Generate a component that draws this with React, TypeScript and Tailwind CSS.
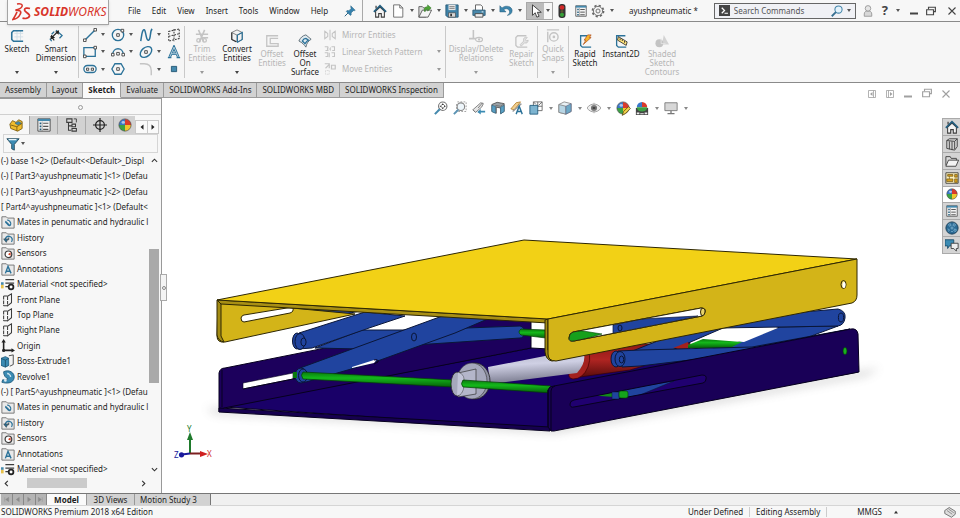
import React from 'react'

type Glyph = { className?: string }

const Svg = ({ className = 'w-3.5 h-3.5', children }: { className?: string; children: React.ReactNode }) => (
  <svg viewBox="0 0 16 16" fill="none" className={'shrink-0 ' + className} aria-hidden="true">{children}</svg>
)

const blue = '#2b7299'
const dark = '#3c3c3c'
const gray = '#c4c4c4'

const Caret = ({ className = 'text-[#555]' }: Glyph) => (
  <svg viewBox="0 0 4 3" className={'w-1 h-[3px] shrink-0 ' + className} aria-hidden="true"><path d="M0 0h4L2 3z" fill="currentColor" /></svg>
)

/* ---------- title bar icons ---------- */

const HomeIcon = ({ className }: Glyph) => (
  <Svg className={className}>
    <path d="M3 8v7h3.5v-4h3v4H13V8L8 3.5z" fill="#f4f4f4" stroke={dark} strokeWidth="1.2" />
    <path d="M1 9l7-7 7 7" stroke="#225d7e" strokeWidth="2" />
    <path d="M3.5 5V2" stroke={dark} strokeWidth="1.4" />
  </Svg>
)
const NewIcon = () => (
  <Svg><path d="M3 1h7l3.5 3.5V15H3z" fill="#fff" stroke="#666" /><path d="M10 1v3.5h3.5" stroke="#666" /></Svg>
)
const OpenIcon = () => (
  <Svg>
    <path d="M1 3h4l1.500 1.500H9V15H1z" fill="#dedede" stroke="#555" />
    <path d="M1 15l4-8h10.500l-4 8z" fill="#f5f5f5" stroke="#555" />
    <path d="M7 7c0-3 2-4 4-4V1l4 3.500L11 8V6C9 6 8 7 8 9z" fill="#4fa536" stroke="#28711b" strokeWidth=".6" />
  </Svg>
)
const SaveIcon = () => (
  <Svg>
    <path d="M1 1h14v14H3l-2-2z" fill="#3e82a8" stroke="#2c5a76" />
    <path d="M4 1h8v6H4z" fill="#e6e6e6" /><path d="M5 3h6M5 5h6" stroke="#777" />
    <path d="M4 10h8v5H4z" fill="#d5d5d5" stroke="#444" strokeWidth=".7" /><path d="M6 11h2v3H6z" fill="#333" />
  </Svg>
)
const PrintIcon = () => (
  <Svg>
    <path d="M4 7V1h6l2 2v4" fill="#fff" stroke="#555" />
    <path d="M1 7h14v6H1z" fill="#4a89ab" stroke="#2c5a76" />
    <path d="M3.500 11h9v4h-9z" fill="#eee" stroke="#444" /><path d="M11 9h2" stroke="#fff" />
  </Svg>
)
const UndoIcon = () => (
  <Svg>
    <path d="M1 2v7h7L5.500 6.500C8 4.500 11.500 5.500 12 8.500c.3 2-1 3.500-2.500 4.500 3.500-.5 5.500-2.500 5.500-5.500C15 3 8 .500 3.500 4.500z" fill="#3d86ad" stroke="#275e7d" strokeWidth=".6" />
  </Svg>
)
const CursorIcon = () => (
  <Svg><path d="M4 1v12l3-3 2 5 2.500-1-2-4.500H14z" fill="#fff" stroke="#333" /></Svg>
)
const TrafficIcon = () => (
  <Svg>
    <rect x="4" y="0" width="8" height="16" rx="3.500" fill="#333" />
    <circle cx="8" cy="4" r="2.700" fill="#d22828" /><circle cx="8" cy="8.500" r="1.600" fill="#5c5330" /><circle cx="8" cy="12.400" r="2.400" fill="#37a038" />
  </Svg>
)
const ListIcon = ({ className }: Glyph) => (
  <Svg className={className}>
    <path d="M1 1h14v14H1z" fill="#f4f4f4" stroke="#444" /><path d="M1 1h14v2.500H1z" fill="#4489ad" />
    <path d="M3 5h2v2H3zM3 8.500h2v2H3zM3 12h2v2H3z" fill="#225d7e" /><path d="M7 6h6M7 9.500h6M7 13h6" stroke="#555" strokeWidth="1.300" />
    <path d="M6 4v11" stroke="#777" strokeWidth=".6" />
  </Svg>
)
const GearIcon = () => (
  <Svg>
    <circle cx="8" cy="8" r="6.300" stroke="#666" strokeWidth="2" strokeDasharray="2.500 2.448" />
    <circle cx="8" cy="8" r="5.300" fill="#f2f2f2" stroke="#666" /><circle cx="8" cy="8" r="2.300" stroke="#666" />
  </Svg>
)
const PinIcon = () => (
  <Svg className="w-3 h-3">
    <path d="M9 1l6 6-1.500.800-1-.3-3 3 .2 2.500-1.200 1L3 8.500l1-1.200 2.500.2 3-3-.5-1.500z" fill="#3581ad" stroke="#25607f" strokeWidth=".6" /><path d="M5.500 10.500L1 15" stroke="#25607f" strokeWidth="1.300" />
  </Svg>
)
const MagnifierIcon = () => (
  <Svg className="w-3 h-3"><circle cx="10" cy="6" r="4.800" fill="#e4f2fb" stroke="#4385a9" strokeWidth="1.400" /><path d="M6.500 9.500L1 15" stroke="#366f90" strokeWidth="2.400" /></Svg>
)
const UserIcon = () => (
  <Svg className="w-3 h-3"><path d="M3 15v-3c0-3 2-4 5-4s5 1 5 4v3z" fill="#d8d8d8" stroke="#888" /><circle cx="8" cy="4.500" r="3.700" fill="#e5e5e5" stroke="#888" /></Svg>
)
const MinimizeIcon = () => <Svg className="w-2 h-2"><path d="M0 13h16" stroke="currentColor" strokeWidth="4" /></Svg>
const RestoreIcon = () => (
  <Svg className="w-2.5 h-2.5"><path d="M4 5V2h11v7h-3" stroke="currentColor" strokeWidth="1.800" /><path d="M1 6h11v8H1z" stroke="currentColor" strokeWidth="1.800" /></Svg>
)
const CloseIcon = () => <Svg className="w-2 h-2"><path d="M1 1l14 14M15 1L1 15" stroke="currentColor" strokeWidth="2.200" /></Svg>
const PaneLeftIcon = () => <Svg className="w-2 h-2"><path d="M1 1h14v14H1zM11 1v14" stroke="currentColor" strokeWidth="1.600" /><path d="M9 4v8L4 8z" fill="currentColor" /></Svg>
const PaneRightIcon = () => <Svg className="w-2 h-2"><path d="M1 1h14v14H1zM5 1v14" stroke="currentColor" strokeWidth="1.600" /><path d="M8 4v8l5-4z" fill="currentColor" /></Svg>

/* ---------- ribbon icons ---------- */

const SketchIcon = () => (
  <Svg><path d="M5 5h10M5 9h10M8 2v11M12 2v11" stroke="#cfdde5" /><path d="M15 2H4L2 4v8l2 2h11" stroke={blue} strokeWidth="1.800" /></Svg>
)
const DimensionIcon = () => (
  <Svg>
    <path d="M3 6l3-3M3 14l-2-3M8 1.500l7 6-3 3" stroke={blue} strokeWidth="1.500" /><path d="M2 8l4 5M4 9l5-5" stroke="#222" strokeWidth="1.300" />
    <path d="M1.500 12l1-5.500L7 10zM11.500 1.500L7 3l4 3.500z" fill="#222" />
  </Svg>
)
const node = (x: number, y: number) => <path d={`M${x - 1.500} ${y - 1.500}h3v3h-3z`} fill="#fff" stroke={dark} />
const LineIcon = () => <Svg><path d="M2 14L14 2" stroke={blue} strokeWidth="1.600" />{node(2, 14)}{node(14, 2)}</Svg>
const CircleIcon = () => <Svg><circle cx="8" cy="8" r="6.500" stroke={blue} strokeWidth="1.500" />{node(8, 8)}{node(13, 3)}</Svg>
const SplineIcon = () => <Svg><path d="M2 15C3 8 4 1 6 2s2 13 5 12c3-2 1-10 4-13" stroke={blue} strokeWidth="1.700" /></Svg>
const PlaneSketchIcon = () => <Svg><path d="M2 4l12-3v11L2 15zM2 9.500l12-3M8 1v14" stroke={dark} strokeWidth="1.200" strokeDasharray="2 1.300" /></Svg>
const RectIcon = () => <Svg><path d="M1 3h13v10H1z" stroke={blue} strokeWidth="1.500" />{node(14, 3)}{node(2, 13)}</Svg>
const ArcIcon = () => <Svg><path d="M2 11c0-9 12-9 12 0" stroke={blue} strokeWidth="1.500" />{node(2, 11)}{node(14, 11)}{node(8, 10)}</Svg>
const EllipseIcon = () => <Svg><ellipse cx="8" cy="8" rx="7.500" ry="5" transform="rotate(-40 8 8)" stroke={blue} strokeWidth="1.600" />{node(8, 8)}</Svg>
const TextIcon = ({ className }: Glyph) => (
  <Svg className={className}><path d="M3 14L8 2.500 13 14M5 10h6" stroke={blue} strokeWidth="3" /><path d="M3 14L8 2.500 13 14M5 10h6" stroke="#e8f1f6" strokeWidth=".8" /><path d="M1 14.500h4M11 14.500h4" stroke={blue} strokeWidth="1.400" /></Svg>
)
const SlotIcon = () => <Svg><rect x="1" y="4" width="14" height="8" rx="4" stroke={blue} strokeWidth="1.500" /><path d="M4 7h2.500v2.500H4zM9.500 7H12v2.500H9.500z" stroke={dark} /></Svg>
const PolygonIcon = () => <Svg><path d="M4.500 2h7L15 8l-3.500 6h-7L1 8z" stroke={blue} strokeWidth="1.500" />{node(8, 8)}</Svg>
const FilletIcon = () => <Svg><path d="M1 2h5c5 0 8 3 8 8v5" stroke={gray} strokeWidth="1.600" /></Svg>
const PointIcon = () => <Svg><path d="M5 5h6v6H5z" fill="#4489ad" stroke="#1f5472" /></Svg>
const TrimIcon = () => <Svg><path d="M4 1l6 14M11 1L5 15M1 6h14M8 10h7" stroke={gray} strokeWidth="1.800" /><circle cx="4" cy="13" r="2" stroke={gray} strokeWidth="1.500" /><circle cx="11" cy="13" r="2" stroke={gray} strokeWidth="1.500" /></Svg>
const ConvertIcon = () => (
  <Svg><path d="M2 4l6-3 6 3v8l-5 3-7-3z" fill="#f2f2f2" stroke="#777" /><path d="M2 4l6 3 6-3M8 7v8" stroke="#777" /><path d="M8.500 7L14 4v8l-5.500 3z" stroke="#2b7299" strokeWidth="1.300" /><path d="M2 4v8l5 2.500" stroke="#333" strokeWidth="1.300" /></Svg>
)
const OffsetIcon = () => <Svg><path d="M15 2H2v12h13v-3H6V5h9" stroke={gray} strokeWidth="1.500" /></Svg>
const OffsetSurfaceIcon = () => (
  <Svg><path d="M1 8c2-4 4-6 8-7l6 5c-3 2-5 4-6 9-2-3-4-5-8-7z" fill="#dfeaf0" stroke="#55656e" /><path d="M5 8c1-2 3-3 4-3l3 2c-2 1-3 3-4 4z" stroke={blue} strokeWidth="1.500" /></Svg>
)
const MirrorIcon = () => <Svg className="w-3 h-3"><path d="M1 3l4 3v4l-4 3zM15 3l-4 3v4l4 3zM8 1v14" stroke={gray} strokeWidth="1.400" /></Svg>
const PatternIcon = () => <Svg className="w-3 h-3"><path d="M1 1h4v5H2M6 2c-2 1-2 3 0 4M10 1h4v5h-3M1 9h4v5H2M10 9h4v5h-3M9 2c-1 1-1 3 0 4M7 9v6" stroke={gray} strokeWidth="1.400" /></Svg>
const MoveIcon = () => <Svg className="w-3 h-3"><path d="M1 1h6v6M10 3h5v5h-5z" stroke={gray} strokeWidth="1.600" /><path d="M7 2L2 7" stroke={gray} strokeWidth="1.500" /><path d="M2 10h5v5H2z" stroke={gray} strokeDasharray="1 1" /></Svg>
const RelationsIcon = () => <Svg><path d="M5 1v10M0 11h10" stroke={gray} strokeWidth="1.800" /><ellipse cx="11.500" cy="12" rx="4" ry="2.500" fill="#f6f6f6" stroke={gray} strokeWidth="1.300" /><circle cx="11.500" cy="12" r="1.300" fill={gray} /></Svg>
const RepairIcon = () => <Svg><path d="M13 2H3L1 4v9l2 2h11" stroke={gray} strokeWidth="1.500" /><path d="M6 12l4-4c-1-3 1-5 4-4l-2 2 1 2 2-1c0 3-2 4-4 3l-4 4z" fill="#e2e2e2" stroke={gray} /></Svg>
const SnapsIcon = () => <Svg><path d="M1 1h14M2 3v12" stroke={gray} strokeWidth="1.600" /><circle cx="9" cy="9" r="4.800" stroke={gray} strokeWidth="1.600" /><circle cx="9" cy="9" r="1.500" fill={gray} /></Svg>
const RapidIcon = () => (
  <Svg><path d="M11 2H3v11l2 2h10" stroke={blue} strokeWidth="1.500" /><path d="M11 1h4l-2 3h2L6 12l3-5H7z" fill="#f6b52b" stroke="#b24e1c" strokeWidth=".8" /></Svg>
)
const InstantIcon = () => (
  <Svg><path d="M13 2H3v11l2 2h9" stroke={blue} strokeWidth="1.500" /><path d="M5 3l10 6-1 4L4 7z" fill="#ffe37a" stroke="#333" /><path d="M7 5v2M9.500 6v2M12 8v2" stroke="#333" /></Svg>
)
const ShadedIcon = () => <Svg><path d="M10 1l6 11H8z" fill="#d3d3d3" /><circle cx="5" cy="10.500" r="4.500" fill="#c3c3c3" /><path d="M7 5v6h5" stroke="#e6e6e6" /></Svg>

/* ---------- feature tree icons ---------- */

const Folder = ({ children }: { children: React.ReactNode }) => (
  <Svg className="w-3.5 h-3.5"><path d="M1 2h5l1.500 1.500H15V15H1z" fill="#e9e9e9" stroke="#6d6d6d" />{children}</Svg>
)
const MatesIcon = () => <Folder><path d="M5 7l5 5M7 6c2-1 5 3 4 5s-3 1-4-1l-2-2" stroke={blue} strokeWidth="1.300" /></Folder>
const HistoryIcon = () => <Folder><path d="M5 11a4 4 0 117 1.500" stroke={blue} strokeWidth="1.500" /><path d="M3 9l3 4 2-4zM9 7v3H7" fill={blue} stroke={dark} strokeWidth=".6" /></Folder>
const SensorsIcon = () => <Folder><circle cx="8.500" cy="9.500" r="3.800" fill="#fff" stroke={dark} strokeWidth="1.400" /><path d="M8 9.500L11 7v4z" fill="#d23a1d" /></Folder>
const AnnotationsIcon = () => <Folder><path d="M5 13l3-8 3.500 8M6 10.500h4" stroke={blue} strokeWidth="1.600" /></Folder>
const MaterialIcon = () => (
  <Svg><path d="M5 3h10M5 7h10M5 11h4" stroke={dark} strokeWidth="1.400" /><path d="M0 6h3v3H0z" fill="#4489ad" /><path d="M0 9h3v4H0z" fill="#e7c04a" /><circle cx="11.500" cy="11.500" r="2.700" fill="#fff" stroke="#222" strokeWidth="2" /></Svg>
)
const PlaneIcon = () => <Svg><path d="M7 4l5-3v10l-5 4" stroke={dark} strokeWidth="1.200" /><path d="M3 3.500v11M3 3.500h4M3 14.500h4M7.500 4v11" stroke={dark} strokeWidth="1.200" strokeDasharray="4 1" /></Svg>
const OriginIcon = () => <Svg><path d="M3 3v10h10" stroke="#222" strokeWidth="1.800" /><path d="M3 0l2.500 4h-5zM16 13l-4-2.500v5z" fill="#222" /><circle cx="3" cy="13" r="1.800" fill="#222" /></Svg>
const ExtrudeIcon = () => (
  <Svg><path d="M0 5l5-2 4 2v8l-4 2-5-2z" fill="#3b8bb3" stroke="#225d7e" /><path d="M0 5l5 2 4-2M5 7v8" stroke="#1d516d" /><path d="M9 2l5-1v11l-4 2" fill="#f2f2f2" stroke={dark} /></Svg>
)
const RevolveIcon = () => (
  <Svg><path d="M3 2c6-3 13 1 12 7s-8 7-14 5l1-3c3 1 5 1 6-1-3-1-5-4-5-8z" fill="#3b8bb3" stroke="#225d7e" /><path d="M7 4c2 0 4 2 4 4" stroke="#cde4ef" strokeWidth="1.500" /><circle cx="5" cy="12" r="1.500" fill="#dcecf4" /></Svg>
)

const BallIcon = ({ className }: Glyph) => (
  <Svg className={className}>
    <path d="M8 8V1a7 7 0 00-7 7z" fill="#3a78c9" /><path d="M8 8h7a7 7 0 00-7-7z" fill="#d93a2c" />
    <path d="M8 8v7a7 7 0 007-7z" fill="#f0c52d" /><path d="M8 8H1a7 7 0 007 7z" fill="#3da145" />
    <circle cx="8" cy="8" r="7" stroke="#444" strokeWidth=".7" /><ellipse cx="6" cy="5" rx="2" ry="1.500" fill="#fff" opacity=".6" />
  </Svg>
)
const PartIcon = () => (
  <Svg><path d="M1 7l3-4 4 2 3-3 4 2v8l-5 3-8-3z" fill="#f0bd2e" stroke="#7b5b10" /><path d="M2 8l7 2 6-4M9 10v5" stroke="#7b5b10" /><path d="M7 6l4-2 3 2-4 2z" fill="#4489ad" stroke="#225d7e" strokeWidth=".6" /></Svg>
)
const ConfigIcon = () => <Svg><path d="M2 1h6v4H2zM4 5v9h3M4 9h4M8 7h4v3H8zM8 12h5v3H8z" fill="#ddd" stroke={dark} strokeWidth="1.200" /><path d="M10 1h3v4" stroke={dark} /></Svg>
const TargetIcon = () => <Svg><circle cx="8" cy="8" r="5" stroke="#222" strokeWidth="1.400" /><path d="M8 0v16M0 8h16" stroke="#222" strokeWidth="1.400" /></Svg>
const FunnelIcon = () => <Svg><path d="M1 2h14L9.500 8.500V15l-3-1.500v-5z" fill="#3b8bb3" stroke="#24485a" /><path d="M3 3h9" stroke="#e8f4fa" strokeWidth="1.500" /></Svg>

/* ---------- view toolbar icons ---------- */

const ZoomFitIcon = () => <Svg><circle cx="10" cy="6" r="4.800" fill="#fff" stroke="#777" strokeWidth="1.300" /><path d="M6.500 9.500L1 15" stroke="#4489ad" strokeWidth="2.400" /><path d="M10 2.500L8.500 4.500h3zM10 9.500L8.500 7.500h3zM6.500 6l2-1.500v3zM13.500 6l-2-1.500v3z" fill="#333" /></Svg>
const ZoomAreaIcon = () => <Svg><path d="M5 1h10v11H4V2" stroke="#999" strokeDasharray="2 1.500" /><circle cx="9" cy="6.500" r="4.300" fill="#eef6fb" stroke="#888" strokeWidth="1.300" /><path d="M6 10l-5 5" stroke="#5b93b3" strokeWidth="2.200" /></Svg>
const PrevViewIcon = () => <Svg><path d="M1 10l9-8 3 1-2 4-7 6z" fill="#e5e5e5" stroke="#777" /><path d="M1 10l3 3M12 2l-5 6" stroke="#777" /><path d="M15 11H10V9l-4 3.500 4 3V13h5z" fill="#3b8bb3" /></Svg>
const SectionIcon = () => <Svg><path d="M1 4l6-2.500 8 1.500v9l-4 2.500V8L6 7v7L1 12z" fill="#9aa2a7" stroke="#555" /><path d="M1 5l4 1v8l-4-2zM11 7l4-2v7l-4 2.500z" fill="#5ba0c4" stroke="#225d7e" strokeWidth=".6" /><path d="M5 5l6 1 4-3" stroke="#666" strokeWidth=".8" /></Svg>
const DynamicIcon = () => <Svg><path d="M1 9L7 2l5-1-7 9z" fill="#f3cf8c" stroke="#b58434" /><path d="M3 12L13 3" stroke="#999" strokeWidth="1.600" /><path d="M7 15l3.500-9L14 15M8.500 12h4" stroke={blue} strokeWidth="1.600" /></Svg>
const OrientIcon = () => <Svg><path d="M5 1h10v10H5zM5 1l3 3M15 1l-4 4M10 1v6M9 6h6" stroke="#666" /><path d="M1 5h9v10H1z" fill="#7db4d0" stroke="#225d7e" /></Svg>
const CubeIcon = () => <Svg><path d="M1 4l6-3 8 2v9l-6 3-8-2z" fill="#e9f1f5" stroke="#888" /><path d="M9 6v9l-8-2V4z" fill="#b8d6e5" stroke="#888" /><path d="M9 6l6-3v9l-6 3z" fill="#6ea9c6" stroke="#557" strokeWidth=".6" /></Svg>
const EyeIcon = () => <Svg><path d="M0 8c4-6 12-6 16 0-4 6-12 6-16 0z" fill="#eee" stroke="#999" /><circle cx="8" cy="8" r="3.500" fill="#777" /><circle cx="8" cy="8" r="1.500" fill="#222" /><path d="M8 2v12" stroke="#999" strokeWidth=".7" /></Svg>
const AppearanceIcon = () => (
  <span className="relative"><BallIcon /><Svg className="absolute -right-px -bottom-px w-2.5 h-2.5"><path d="M2 15l2-6 8-8 3 3-8 8z" fill="#f2d34c" stroke="#5b4a18" strokeWidth="1.300" /></Svg></span>
)
const SceneIcon = () => (
  <Svg><path d="M1 8h14v8H1z" fill="#444" /><path d="M2 13h3v2H2zM11 13h3v2h-3zM6 14h4v1H6z" fill="#eee" /><path d="M8 7V1a6 6 0 00-6 6z" fill="#3a78c9" /><path d="M8 7h6a6 6 0 00-6-6z" fill="#d93a2c" /><path d="M2 7h12a6 5 0 01-12 0z" fill="#3da145" /></Svg>
)
const MonitorIcon = () => <Svg><path d="M1 2h14v9H1z" fill="#d7d7d7" stroke="#777" /><path d="M8 11v3M4 14.500h8" stroke="#777" strokeWidth="1.500" /></Svg>

/* ---------- task pane icons ---------- */

const LibraryIcon = () => <Svg><path d="M2 4l3-2 9 0v9l-3 4-9-2z" fill="#d0d0d0" stroke={dark} /><path d="M5 5v9M8 5v10M11 5v9M2 4l9 1 3-3" stroke={dark} /></Svg>
const FolderIcon = () => <Svg><path d="M1 13V3h5l1 2h6v3" fill="#d9d9d9" stroke={dark} /><path d="M1 14l3-7h11.500l-3 7z" fill="#f3f3f3" stroke={dark} /></Svg>
const PaletteIcon = () => <Svg><path d="M1 2h14v12H1z" fill="#fff3bd" stroke={dark} /><path d="M3 4h6v2H3zM5 6v3M2 9h7v3H2zM11 4h3v3h-3zM11 9h3v4h-3z" fill="#d9a21b" stroke="#5e4710" strokeWidth=".7" /></Svg>
const GlobeIcon = () => <Svg><circle cx="8" cy="8" r="7" fill="#2a6a94" stroke="#1c3f57" /><path d="M4 4l2-1 1 2-2 1zM10 3l2 1-1 2-2-1zM7 7h2v2H7zM3 9l2 1-1 2M11 9l2 1-1 2-2-1zM7 12h2" stroke="#7fb4d3" strokeWidth=".9" /></Svg>
const ForumIcon = () => <Svg><path d="M0 2h10v7H5l-2 3V9H0z" fill="#3b8bb3" stroke="#1c4f6b" /><path d="M7 6h8v6h-2v3l-3-3H7z" fill="#eee" stroke={dark} /></Svg>

const DsLogo = () => (
  <svg viewBox="0 0 20 18" className="w-5 h-[18px] shrink-0" fill="none" stroke="#d8352b" aria-hidden="true">
    <path d="M5 1c3-.6 6 0 5 2.500C9.300 5.300 6.500 6.500 3.500 7" strokeWidth="1.500" />
    <path d="M3.500 7.500c4-.6 6.200.5 4.800 3.500-1.300 2.800-4.300 5-7.300 5.500C2.500 14 4 11.500 5 9" strokeWidth="1.700" />
    <path d="M18 5.500c-3-1-5.500-.2-5.500 1.500 0 2.200 5.500 3.500 5 6-.5 2.200-4 2.800-7 2.200" strokeWidth="1.800" />
  </svg>
)

const menus = ['File', 'Edit', 'View', 'Insert', 'Tools', 'Window', 'Help']

const quickTools: { name: string; icon: React.ReactNode; menu?: boolean }[] = [
  { name: 'Home', icon: <HomeIcon /> },
  { name: 'New', icon: <NewIcon />, menu: true },
  { name: 'Open', icon: <OpenIcon />, menu: true },
  { name: 'Save', icon: <SaveIcon />, menu: true },
  { name: 'Print', icon: <PrintIcon />, menu: true },
  { name: 'Undo', icon: <UndoIcon />, menu: true },
]

const TitleBar = () => (
  <header className="flex items-center h-[22px] shrink-0 bg-[#f7f7f7] border-b border-[#8a8a8a]">
    <div className="relative z-10 self-start ml-[7px] w-[102px] h-[25px] shrink-0 flex items-center pl-1 bg-[#fafafa] border border-t-0 border-[#a5a5a5] shadow-sm">
      <DsLogo />
      <h1 className="ml-0.5 text-[12px] leading-none italic text-[#d8352b] whitespace-nowrap"><b>SOLID</b>WORKS</h1>
    </div>
    <nav className="flex items-center gap-[11px] ml-[19px]">
      {menus.map((m) => <button key={m}>{m}</button>)}
    </nav>
    <button aria-label="Pin menu" className="ml-4"><PinIcon /></button>
    <div className="w-px h-full ml-1.5 mr-2.5 bg-[#a9a9a9]"></div>
    <div className="flex items-center gap-1">
      {quickTools.map((t) => (
        <button key={t.name} aria-label={t.name} className="flex items-center gap-[5px]">
          {t.icon}{t.menu && <Caret />}
        </button>
      ))}
    </div>
    <button aria-label="Select" className="flex items-center ml-1 w-[27px] h-[18px] border border-[#a8a8a8]">
      <span className="flex items-center justify-center w-[17px] h-full bg-[#bcbcbc]"><CursorIcon /></span>
      <span className="flex items-center justify-center flex-1 h-full"><Caret /></span>
    </button>
    <div className="flex items-center gap-1 ml-0.5">
      <button aria-label="Rebuild"><TrafficIcon /></button>
      <button aria-label="File properties" className="ml-0.5"><ListIcon className="w-3 h-3" /></button>
      <button aria-label="Options" className="flex items-center gap-[5px]"><GearIcon /><Caret /></button>
    </div>
    <p className="ml-auto mr-4 whitespace-nowrap">ayushpneumatic *</p>
    <div className="flex items-center w-[142px] h-4 shrink-0 px-1 border border-[#666] bg-[#f0f1f5]">
      <Svg className="w-[11px] h-[11px]"><path d="M0 0h16v16H0z" fill="#444" /><path d="M4 4l4 4-4 4M8 12h5" stroke="#fff" strokeWidth="1.800" /></Svg>
      <input aria-label="Search Commands" placeholder="Search Commands" className="flex-1 min-w-0 ml-1 bg-transparent outline-none placeholder:text-[#555]" />
      <button aria-label="Search" className="flex items-center gap-1"><MagnifierIcon /><Caret /></button>
    </div>
    <div className="flex items-center ml-1.5 mr-1 text-[#444]">
      <button aria-label="Log in"><UserIcon /></button>
      <button aria-label="Help" className="flex items-center gap-2 ml-2 mr-2.5"><b className="text-[13px] leading-none">?</b><Caret /></button>
      <button aria-label="Minimize"><MinimizeIcon /></button>
      <button aria-label="Restore" className="mx-2"><RestoreIcon /></button>
      <button aria-label="Close" className="ml-1"><CloseIcon /></button>
    </div>
  </header>
)

type ToolProps = { icon: React.ReactNode; lines: string[]; className: string; disabled?: boolean; low?: boolean; menu?: boolean }

const Tool = ({ icon, lines, className, disabled, low, menu }: ToolProps) => (
  <button disabled={disabled} className={'flex flex-col items-center shrink-0 leading-[9px] ' + (low ? 'pt-3 ' : 'pt-[7px] ') + (disabled ? 'text-[#b5b5b5] ' : '') + className}>
    {icon}
    {lines.map((l, i) => <span key={l} className={'whitespace-nowrap' + (i === 0 ? ' mt-px' : '')}>{l}</span>)}
    {menu && <span className="mt-auto mb-2"><Caret className={disabled ? 'text-[#999]' : 'text-[#444]'} /></span>}
  </button>
)

const Divider = () => <div className="w-px shrink-0 my-1 bg-[#c9c9c9]"></div>

const sketchTools: { name: string; icon: React.ReactNode; menu?: boolean }[] = [
  { name: 'Line', icon: <LineIcon />, menu: true },
  { name: 'Circle', icon: <CircleIcon />, menu: true },
  { name: 'Spline', icon: <SplineIcon />, menu: true },
  { name: 'Plane', icon: <PlaneSketchIcon /> },
  { name: 'Rectangle', icon: <RectIcon />, menu: true },
  { name: 'Arc', icon: <ArcIcon />, menu: true },
  { name: 'Ellipse', icon: <EllipseIcon />, menu: true },
  { name: 'Text', icon: <TextIcon /> },
  { name: 'Slot', icon: <SlotIcon />, menu: true },
  { name: 'Polygon', icon: <PolygonIcon /> },
  { name: 'Fillet', icon: <FilletIcon />, menu: true },
  { name: 'Point', icon: <PointIcon /> },
]

const entityTools = [
  { name: 'Mirror Entities', icon: <MirrorIcon />, menu: false },
  { name: 'Linear Sketch Pattern', icon: <PatternIcon />, menu: true },
  { name: 'Move Entities', icon: <MoveIcon />, menu: true },
]

const Ribbon = () => (
  <section className="flex h-[61px] shrink-0 bg-[#f6f6f6] border-b border-[#8a8a8a]">
    <Tool icon={<SketchIcon />} lines={['Sketch']} className="w-[34px]" menu />
    <Tool icon={<DimensionIcon />} lines={['Smart', 'Dimension']} className="w-[44px]" menu />
    <Divider />
    <div className="grid grid-cols-[28px_28px_28px_17px] grid-rows-3 pl-1 py-1 shrink-0">
      {sketchTools.map((t) => (
        <button key={t.name} aria-label={t.name} className="flex items-center gap-1">{t.icon}{t.menu && <Caret />}</button>
      ))}
    </div>
    <Divider />
    <Tool icon={<TrimIcon />} lines={['Trim', 'Entities']} className="w-[34px]" disabled menu />
    <Tool icon={<ConvertIcon />} lines={['Convert', 'Entities']} className="w-9" menu />
    <Tool icon={<OffsetIcon />} lines={['Offset', 'Entities']} className="w-[34px]" disabled low />
    <Tool icon={<OffsetSurfaceIcon />} lines={['Offset', 'On', 'Surface']} className="w-8" low />
    <div className="grid grid-rows-3 w-[124px] shrink-0 pl-[3px] pr-1 py-1 text-[#b5b5b5]">
      {entityTools.map((t) => (
        <button key={t.name} disabled className="flex items-center gap-1.5">
          {t.icon}<span>{t.name}</span>{t.menu && <span className="ml-auto"><Caret className="text-[#999]" /></span>}
        </button>
      ))}
    </div>
    <Divider />
    <Tool icon={<RelationsIcon />} lines={['Display/Delete', 'Relations']} className="w-[60px]" disabled menu />
    <Tool icon={<RepairIcon />} lines={['Repair', 'Sketch']} className="w-[31px]" disabled low />
    <Divider />
    <Tool icon={<SnapsIcon />} lines={['Quick', 'Snaps']} className="w-[30px]" disabled menu />
    <Divider />
    <Tool icon={<RapidIcon />} lines={['Rapid', 'Sketch']} className="w-8" low />
    <Tool icon={<InstantIcon />} lines={['Instant2D']} className="w-10" low />
    <Tool icon={<ShadedIcon />} lines={['Shaded', 'Sketch', 'Contours']} className="w-[42px]" disabled low />
  </section>
)

const tabs = ['Assembly', 'Layout', 'Sketch', 'Evaluate', 'SOLIDWORKS Add-Ins', 'SOLIDWORKS MBD', 'SOLIDWORKS Inspection']

const TabRow = () => (
  <div className="flex h-[15px] shrink-0 bg-white">
    {tabs.map((t) => (
      <button key={t} className={'px-[5px] border-r border-b border-[#9b9b9b] whitespace-nowrap ' + (t === 'Sketch' ? 'bg-[#fafafa] font-bold border-b-transparent' : 'bg-[#d2d2d2]')}>{t}</button>
    ))}
    <div className="flex items-end gap-2.5 ml-auto mr-2.5 text-[#a0a0a0]">
      <button aria-label="Collapse left"><PaneLeftIcon /></button>
      <button aria-label="Collapse right"><PaneRightIcon /></button>
      <button aria-label="Minimize document"><MinimizeIcon /></button>
      <button aria-label="Restore document"><RestoreIcon /></button>
      <button aria-label="Close document"><CloseIcon /></button>
    </div>
  </div>
)

const tree: { text: string; icon?: React.ReactNode }[] = [
  { text: '(-) base 1<2> (Default<<Default>_Displ' },
  { text: '(-) [ Part3^ayushpneumatic ]<1> (Defau' },
  { text: '(-) [ Part3^ayushpneumatic ]<2> (Defau' },
  { text: '[ Part4^ayushpneumatic ]<1> (Default<' },
  { text: 'Mates in penumatic and hydraulic l', icon: <MatesIcon /> },
  { text: 'History', icon: <HistoryIcon /> },
  { text: 'Sensors', icon: <SensorsIcon /> },
  { text: 'Annotations', icon: <AnnotationsIcon /> },
  { text: 'Material <not specified>', icon: <MaterialIcon /> },
  { text: 'Front Plane', icon: <PlaneIcon /> },
  { text: 'Top Plane', icon: <PlaneIcon /> },
  { text: 'Right Plane', icon: <PlaneIcon /> },
  { text: 'Origin', icon: <OriginIcon /> },
  { text: 'Boss-Extrude1', icon: <ExtrudeIcon /> },
  { text: 'Revolve1', icon: <RevolveIcon /> },
  { text: '(-) [ Part5^ayushpneumatic ]<1> (Defau' },
  { text: 'Mates in penumatic and hydraulic l', icon: <MatesIcon /> },
  { text: 'History', icon: <HistoryIcon /> },
  { text: 'Sensors', icon: <SensorsIcon /> },
  { text: 'Annotations', icon: <AnnotationsIcon /> },
  { text: 'Material <not specified>', icon: <MaterialIcon /> },
]

const panelTabs = [
  { name: 'Feature tree', icon: <PartIcon /> },
  { name: 'Properties', icon: <ListIcon /> },
  { name: 'Configurations', icon: <ConfigIcon /> },
  { name: 'DimXpert', icon: <TargetIcon /> },
]

const Chevron = ({ d, className = 'w-[7px] h-[7px]' }: { d: string; className?: string }) => (
  <Svg className={className}><path d={d} stroke="#333" strokeWidth="2.500" /></Svg>
)

const FeaturePanel = () => (
  <aside className="relative flex flex-col w-[162px] shrink-0 border-r border-[#999] bg-[#f7f7f7] border-t">
    <div className="flex items-center justify-center h-[15px] mt-px border-b border-[#d0d0d0] shrink-0">
      <span className="w-[5px] h-[5px] rounded-full border border-[#999]"></span>
    </div>
    <div className="flex h-[18px] mt-px pl-0.5 pr-0.5 shrink-0">
      {panelTabs.map((t, i) => (
        <button key={t.name} aria-label={t.name} className={'flex items-center justify-center w-7 border-r border-[#aaa] ' + (i ? 'bg-[#d2d2d2]' : 'bg-[#f7f7f7]')}>{t.icon}</button>
      ))}
      <button aria-label="Appearances" className="w-[21px] flex items-center justify-center bg-[#d2d2d2]"><BallIcon /></button>
      <button aria-label="Previous tab" className="mt-1 w-[13px] flex items-center justify-center border border-[#c9c9c9] bg-[#fafafa]"><Svg className="w-1.5 h-1.5"><path d="M12 1v14L4 8z" fill="#222" /></Svg></button>
      <button aria-label="Next tab" className="mt-1 flex-1 flex items-center justify-center border border-l-0 border-[#c9c9c9] bg-[#fafafa]"><Svg className="w-1.5 h-1.5"><path d="M4 1v14l8-7z" fill="#222" /></Svg></button>
    </div>
    <label className="flex items-center h-[19px] mx-[3px] pl-0.5 gap-px border border-[#d5d5d5] shrink-0">
      <FunnelIcon /><Caret />
      <input aria-label="Filter tree" className="flex-1 min-w-0 bg-transparent outline-none" />
    </label>
    <div className="flex flex-1 min-h-0 mr-0.5">
      <ul className="flex flex-col flex-1 min-w-0">
        {tree.map((n, i) => (
          <li key={i} className="flex items-center flex-1 min-h-0 gap-0.5 overflow-hidden whitespace-nowrap pl-px">
            {n.icon}<span>{n.text}</span>
          </li>
        ))}
      </ul>
      <div className="flex flex-col items-center w-2.5 py-1">
        <Chevron d="M2 11l6-6 6 6" />
        <div className="flex-[86] w-px"></div>
        <div className="flex-[137] w-full bg-[#a9a9a9]"></div>
        <div className="flex-[84] w-px"></div>
        <Chevron d="M2 5l6 6 6-6" />
      </div>
    </div>
    <div className="flex items-center h-3 mb-1 pl-[3px] pr-[14px] shrink-0">
      <Chevron d="M11 2L5 8l6 6" />
      <div className="w-[60px] h-2.5 ml-[17px] bg-[#cbcbcb]"></div>
      <span className="ml-auto"><Chevron d="M5 2l6 6-6 6" /></span>
    </div>
    <button aria-label="Resize panel" className="absolute z-10 -right-1.5 top-[175px] flex items-center justify-center w-[7px] h-[27px] border border-[#aaa] bg-[#f4f4f4]">
      <span className="w-1 h-1 rounded-full border border-[#888]"></span>
    </button>
  </aside>
)

const viewTools: { name: string; icon: React.ReactNode; menu?: boolean }[] = [
  { name: 'Zoom to fit', icon: <ZoomFitIcon /> },
  { name: 'Zoom to area', icon: <ZoomAreaIcon /> },
  { name: 'Previous view', icon: <PrevViewIcon /> },
  { name: 'Section view', icon: <SectionIcon /> },
  { name: 'Dynamic annotation', icon: <DynamicIcon /> },
  { name: 'View orientation', icon: <OrientIcon />, menu: true },
  { name: 'Display style', icon: <CubeIcon />, menu: true },
  { name: 'Hide/show items', icon: <EyeIcon />, menu: true },
  { name: 'Edit appearance', icon: <AppearanceIcon /> },
  { name: 'Apply scene', icon: <SceneIcon />, menu: true },
  { name: 'View settings', icon: <MonitorIcon />, menu: true },
]

const taskPane = [
  { name: 'Resources', icon: <HomeIcon /> },
  { name: 'Design library', icon: <LibraryIcon /> },
  { name: 'File explorer', icon: <FolderIcon /> },
  { name: 'View palette', icon: <PaletteIcon /> },
  { name: 'Appearances', icon: <BallIcon className="w-3 h-3" /> },
  { name: 'Custom properties', icon: <ListIcon className="w-3 h-3" /> },
  { name: 'Exchange', icon: <GlobeIcon /> },
  { name: 'Forum', icon: <ForumIcon /> },
]

const Model = () => (
  <svg viewBox="162 118 780 375" className="flex-1 min-w-0 h-full" strokeLinejoin="round" aria-label="Scissor lift model">
    <defs>
      <linearGradient id="rod" x1="0" y1="0" x2="0" y2="1"><stop offset="0" stopColor="#0a7a0e" /><stop offset=".4" stopColor="#14b81b" /><stop offset="1" stopColor="#066009" /></linearGradient>
      <linearGradient id="tube" x1="0" y1="0" x2=".2" y2="1"><stop offset="0" stopColor="#b7b8cc" /><stop offset=".4" stopColor="#cfd0e4" /><stop offset="1" stopColor="#77788c" /></linearGradient>
      <linearGradient id="red" x1="0" y1="0" x2="0" y2="1"><stop offset="0" stopColor="#8d1714" /><stop offset=".5" stopColor="#b02522" /><stop offset="1" stopColor="#5a0d0c" /></linearGradient>
      <filter id="soft" x="-10%" y="-20%" width="120%" height="150%"><feGaussianBlur stdDeviation="5" /></filter>
      <clipPath id="slotTop"><path d="M573 332L701 308Q706 308 705 312Q705 315 702 316L574 341Q569 342 569 338Q569 333 573 332z" /></clipPath>
      <clipPath id="slotBase"><path d="M574 400L702 375Q707 375 706 379Q706 382 703 383L574 407Q570 408 570 404Q570 401 574 400z" /></clipPath>
    </defs>

    <path d="M206 408L551 426L880 368L866 376L555 433L215 414z" fill="#777" opacity=".3" filter="url(#soft)" />

    {/* base tray */}
    <g stroke="#07001f" strokeWidth="1">
      <path d="M224 407L531 348L858 366V372L551 429z" fill="#190068" />
      <path d="M219 412V373Q220 368 225 368L531 307V348L224 408z" fill="#1c005c" />
      <path d="M222 370V407" fill="none" />
      <path d="M219 408L550 427V431L219 412z" fill="#16004f" />
    </g>
    <path d="M243 383L293 373V379L243 389z" fill="#fff" stroke="#07001f" strokeWidth=".6" />
    <path d="M243 389L293 379M293 379L372 363" stroke="#07001f" />

    {/* left scissor arms */}
    <g fill="#20449f" stroke="#0a1638" strokeWidth="1">
      <path d="M315 348L362 330L412 330L520 326Q525 327 524 333Q524 338 520 338L430 344L360 349z" />
      <path d="M299 333L365 312L405 316L372 327L312 348L298 349z" />
      <path d="M293 307L299 316L345 314L360 311z" />
      <ellipse cx="297" cy="341" rx="4.500" ry="8" />
      <ellipse cx="300" cy="341.500" rx="5" ry="8" />
      <ellipse cx="303.500" cy="342" rx="2.600" ry="4" />
      <path d="M300 368L445 315L490 318L455 333L372 363L306 382L298 382z" />
      <ellipse cx="414" cy="337" rx="2.500" ry="4" />
      <ellipse cx="301" cy="375.500" rx="6" ry="7.500" />
      <ellipse cx="303" cy="375.500" rx="4.500" ry="6.500" />
      <ellipse cx="299" cy="311" rx="2" ry="3" />
    </g>
    <path d="M352 367L374 360Q378 359 374 363L352 368z" fill="#fff" />
    <path d="M374 360Q379 359 378 362L374 364" fill="none" stroke="#07001f" />
    <path d="M293 372h4v6h-4z" fill="#0a7a0e" />
    <path d="M303 372L453 380V387L303 379Q300 375 303 372z" fill="url(#rod)" stroke="#033f05" strokeWidth=".7" />
    <path d="M521 329L546 330V338L521 335Q517 332 521 329z" fill="url(#rod)" stroke="#033f05" strokeWidth=".7" />

    {/* pneumatic cylinder */}
    <path d="M585 352L625 345L690 342V352L630 370L580 377z" fill="url(#red)" stroke="#300" strokeWidth=".6" />
    <path d="M584 350Q593 352 588 367Q583 379 573 379Q568 378 569 374L582 354z" fill="#a3211e" stroke="#400" strokeWidth=".7" />
    <path d="M488 367L545 356L584 354Q586 363 577 373L490 384z" fill="url(#tube)" />
    <ellipse cx="475" cy="381" rx="15" ry="18" fill="#8f91a4" stroke="#222" strokeWidth=".8" />
    <ellipse cx="472" cy="381" rx="15" ry="18" fill="#a6a8bc" stroke="#333" strokeWidth=".6" />
    <path d="M458 373L476 369V394L458 397z" fill="#b4b6ca" stroke="#333" strokeWidth=".7" />
    <ellipse cx="457" cy="384" rx="6" ry="12" fill="#a6a8bc" stroke="#222" strokeWidth=".8" />
    <path d="M458 372Q466 374 464 386Q463 395 457 396" fill="#c2c4d8" stroke="#444" strokeWidth=".5" />
    <path d="M463 380L551 386V393L463 387Q460 384 463 380z" fill="url(#rod)" stroke="#033f05" strokeWidth=".7" />

    {/* right scissor arms */}
    <g fill="#20449f" stroke="#0a1638" strokeWidth="1">
      <path d="M780 327L838 326L806 338L730 352L700 356z" />
      <path d="M630 352L710 320L838 309Q846 311 845 318Q844 325 838 326L723 328L672 350z" />
    </g>
    <path d="M724 329L778 328L744 342L702 339z" fill="#fff" />
    <path d="M688 345L703 339L742 342L730 348H688z" fill="url(#rod)" />
    <g fill="#20449f" stroke="#0a1638" strokeWidth="1">
      <path d="M618 351L640 350L752 347L850 329L740 354L640 366L622 367z" />
      <ellipse cx="616" cy="359" rx="5" ry="8" />
      <ellipse cx="620" cy="359" rx="5" ry="7.500" />
      <ellipse cx="621.500" cy="359.500" rx="2.200" ry="3.500" />
      <ellipse cx="841" cy="317.500" rx="2.600" ry="4.500" />
    </g>
    <path d="M673 348L688 342V348z" fill="#a3211e" />

    {/* base right flange */}
    <path d="M548 427V390Q549 386 554 386L851 329Q857 328 858 334L859 372L554 431L551 431z" fill="#190057" stroke="#07001f" />
    <path d="M551 431V391Q551 387 555 386M548 390V427" fill="none" stroke="#07001f" />
    <g clipPath="url(#slotBase)">
      <path d="M565 370h145v42H565z" fill="#200070" />
      <path d="M617 390L674 381L640 395L615 400z" fill="#20449f" stroke="#0a1638" strokeWidth=".6" />
      <path d="M597 395L615 392V397L600 396z" fill="#118c17" />
    </g>
    <path d="M574 400L702 375Q707 375 706 379Q706 382 703 383L574 407Q570 408 570 404Q570 401 574 400z" fill="none" stroke="#07001f" />
    <path d="M612 392h7v7h-7z" fill="#20449f" stroke="#0a1638" strokeWidth=".5" />
    <rect x="619" y="391" width="9" height="7" rx="2" fill="#15a51b" stroke="#033f05" strokeWidth=".6" />
    <ellipse cx="845" cy="351" rx="2" ry="3.500" fill="#18b01f" stroke="#033f05" strokeWidth=".7" />

    {/* top platform */}
    <g stroke="#2e2703" strokeWidth="1">
      <path fillRule="evenodd" d="M218 301L355 314L225 342Q217 343 217 336zM244 315L293 307Q294 312 290 313L244 322Q241 322 241 318Q242 315 244 315z" fill="#d3b418" />
      <path d="M217 300V335Q218 341 224 342L221 336V304z" fill="#a38b12" />
      <path d="M217 300L548 319V323L221 304z" fill="#a88f14" />
      <path d="M217 300L524 240L857 259L548 319z" fill="#f2d116" />
      <path d="M545 320V352Q546 360 552 361L556 360L548 350V319z" fill="#a38b12" />
      <path fillRule="evenodd" d="M548 319L857 259V295Q857 301 852 303L556 361Q548 361 548 354zM573 332L701 308Q706 308 705 312Q705 315 702 316L574 341Q569 342 569 338Q569 333 573 332z" fill="#d3b418" />
      <ellipse cx="843.500" cy="284.500" rx="2.500" ry="4" fill="#e9d36a" />
      <ellipse cx="844" cy="285" rx="1.500" ry="3" fill="#fff" stroke="none" />
    </g>
    <g clipPath="url(#slotTop)">
      <path d="M565 300h145v45H565z" fill="#fff" />
      <path d="M566 330L583 331L602 334L571 343L566 340z" fill="#16a01c" stroke="#033f05" strokeWidth=".6" />
      <path d="M613 325L640 319L698 316L640 330L613 334z" fill="#20449f" stroke="#0a1638" strokeWidth=".7" />
      <ellipse cx="620" cy="328" rx="2" ry="3" fill="#20449f" stroke="#0a1638" />
      <ellipse cx="703" cy="312" rx="2.500" ry="4" fill="#e9d36a" stroke="#2e2703" />
    </g>
    <path d="M573 332L701 308Q706 308 705 312Q705 315 702 316L574 341Q569 342 569 338Q569 333 573 332z" fill="none" stroke="#2e2703" />

    {/* triad */}
    <g strokeWidth="2">
      <path d="M190 454V438" stroke="#1f7a2c" /><path d="M190 432l3 8h-6z" fill="#1f7a2c" />
      <path d="M190 453.500h11" stroke="#7c1f1f" /><path d="M200 451l8 3-8 3z" fill="#d01f1f" />
      <path d="M190 453.500l-8 1" stroke="#1b1b9c" /><circle cx="181.500" cy="454.800" r="2.600" fill="#1b1b9c" />
    </g>
    <g fontSize="8">
      <text x="187" y="432" fill="#1f7a2c">Y</text><text x="207" y="457" fill="#d01f1f">X</text><text x="174" y="458" fill="#1b1b9c">Z</text>
    </g>
  </svg>
)

const Viewport = () => (
  <main className="flex flex-col flex-1 min-w-0 bg-white">
    <div className="flex items-center justify-center gap-1 h-5 shrink-0">
      {viewTools.map((t) => (
        <button key={t.name} aria-label={t.name} className="flex items-center gap-1.5 mr-px">{t.icon}{t.menu && <Caret className="text-[#888]" />}</button>
      ))}
    </div>
    <div className="flex flex-1 min-h-0">
      <Model />
      <div className="flex flex-col w-[18px] h-[136px] border border-r-0 border-[#aaa] divide-y divide-[#aaa]">
        {taskPane.map((t) => (
          <button key={t.name} aria-label={t.name} className={'flex flex-1 min-h-0 items-center justify-center ' + (t.name === 'Appearances' ? 'bg-white' : 'bg-[#d4d4d4]')}>{t.icon}</button>
        ))}
      </div>
    </div>
  </main>
)

const pagers = ['M4 3v10M13 3v10L6 8z', 'M12 3v10L5 8z', 'M4 3v10l7-5z', 'M12 3v10M3 3v10l7-5z']

const BottomBar = () => (
  <footer className="shrink-0 bg-[#f7f7f7]">
    <div className="flex h-[12px] border-t border-[#777] bg-[#f0f0f0]">
      <div className="flex w-[47px] pl-px">
        {pagers.map((d) => (
          <button key={d} aria-label="Scroll tabs" className="flex flex-1 items-center justify-center border-r border-[#888] bg-[#b4b4b4]">
            <Svg className="w-[7px] h-[7px]"><path d={d} fill="#8b8b8b" stroke="#8b8b8b" /></Svg>
          </button>
        ))}
      </div>
      <button className="w-10 bg-[#fafafa] font-bold border-r border-[#999]">Model</button>
      <button className="w-12 bg-[#d2d2d2] border-r border-[#999]">3D Views</button>
      <button className="w-[76px] pr-2 bg-[#d2d2d2] border-r border-[#777]">Motion Study 3</button>
    </div>
    <div className="flex items-center h-[13px] pl-px pr-1 border-t border-[#d5d5d5]">
      <span>SOLIDWORKS Premium 2018 x64 Edition</span>
      <span className="ml-auto">Under Defined</span>
      <span className="w-px h-2.5 ml-1.5 bg-[#ccc]"></span>
      <span className="ml-1.5">Editing Assembly</span>
      <span className="w-px h-2.5 ml-1.5 bg-[#ccc]"></span>
      <button className="flex items-center gap-3 ml-[30px] mr-[46px]">MMGS<Svg className="w-1 h-1"><path d="M0 14h16L8 3z" fill="#333" /></Svg></button>
      <button aria-label="Tags"><Svg className="w-3 h-3"><path d="M1 6l6-4 8 5v4l-5 4-9-5z" fill="#ddd" stroke="#555" /><path d="M4 6l7 5M6 4l7 5" stroke="#777" /></Svg></button>
    </div>
  </footer>
)

export default function App() {
  return (
    <div className="flex flex-col h-screen overflow-hidden bg-white text-[8px] leading-[10px] text-[#1e1e1e] font-['Noto_Sans','Open_Sans',sans-serif]">
      <TitleBar />
      <Ribbon />
      <TabRow />
      <div className="flex flex-1 min-h-0">
        <FeaturePanel />
        <Viewport />
      </div>
      <BottomBar />
    </div>
  )
}
